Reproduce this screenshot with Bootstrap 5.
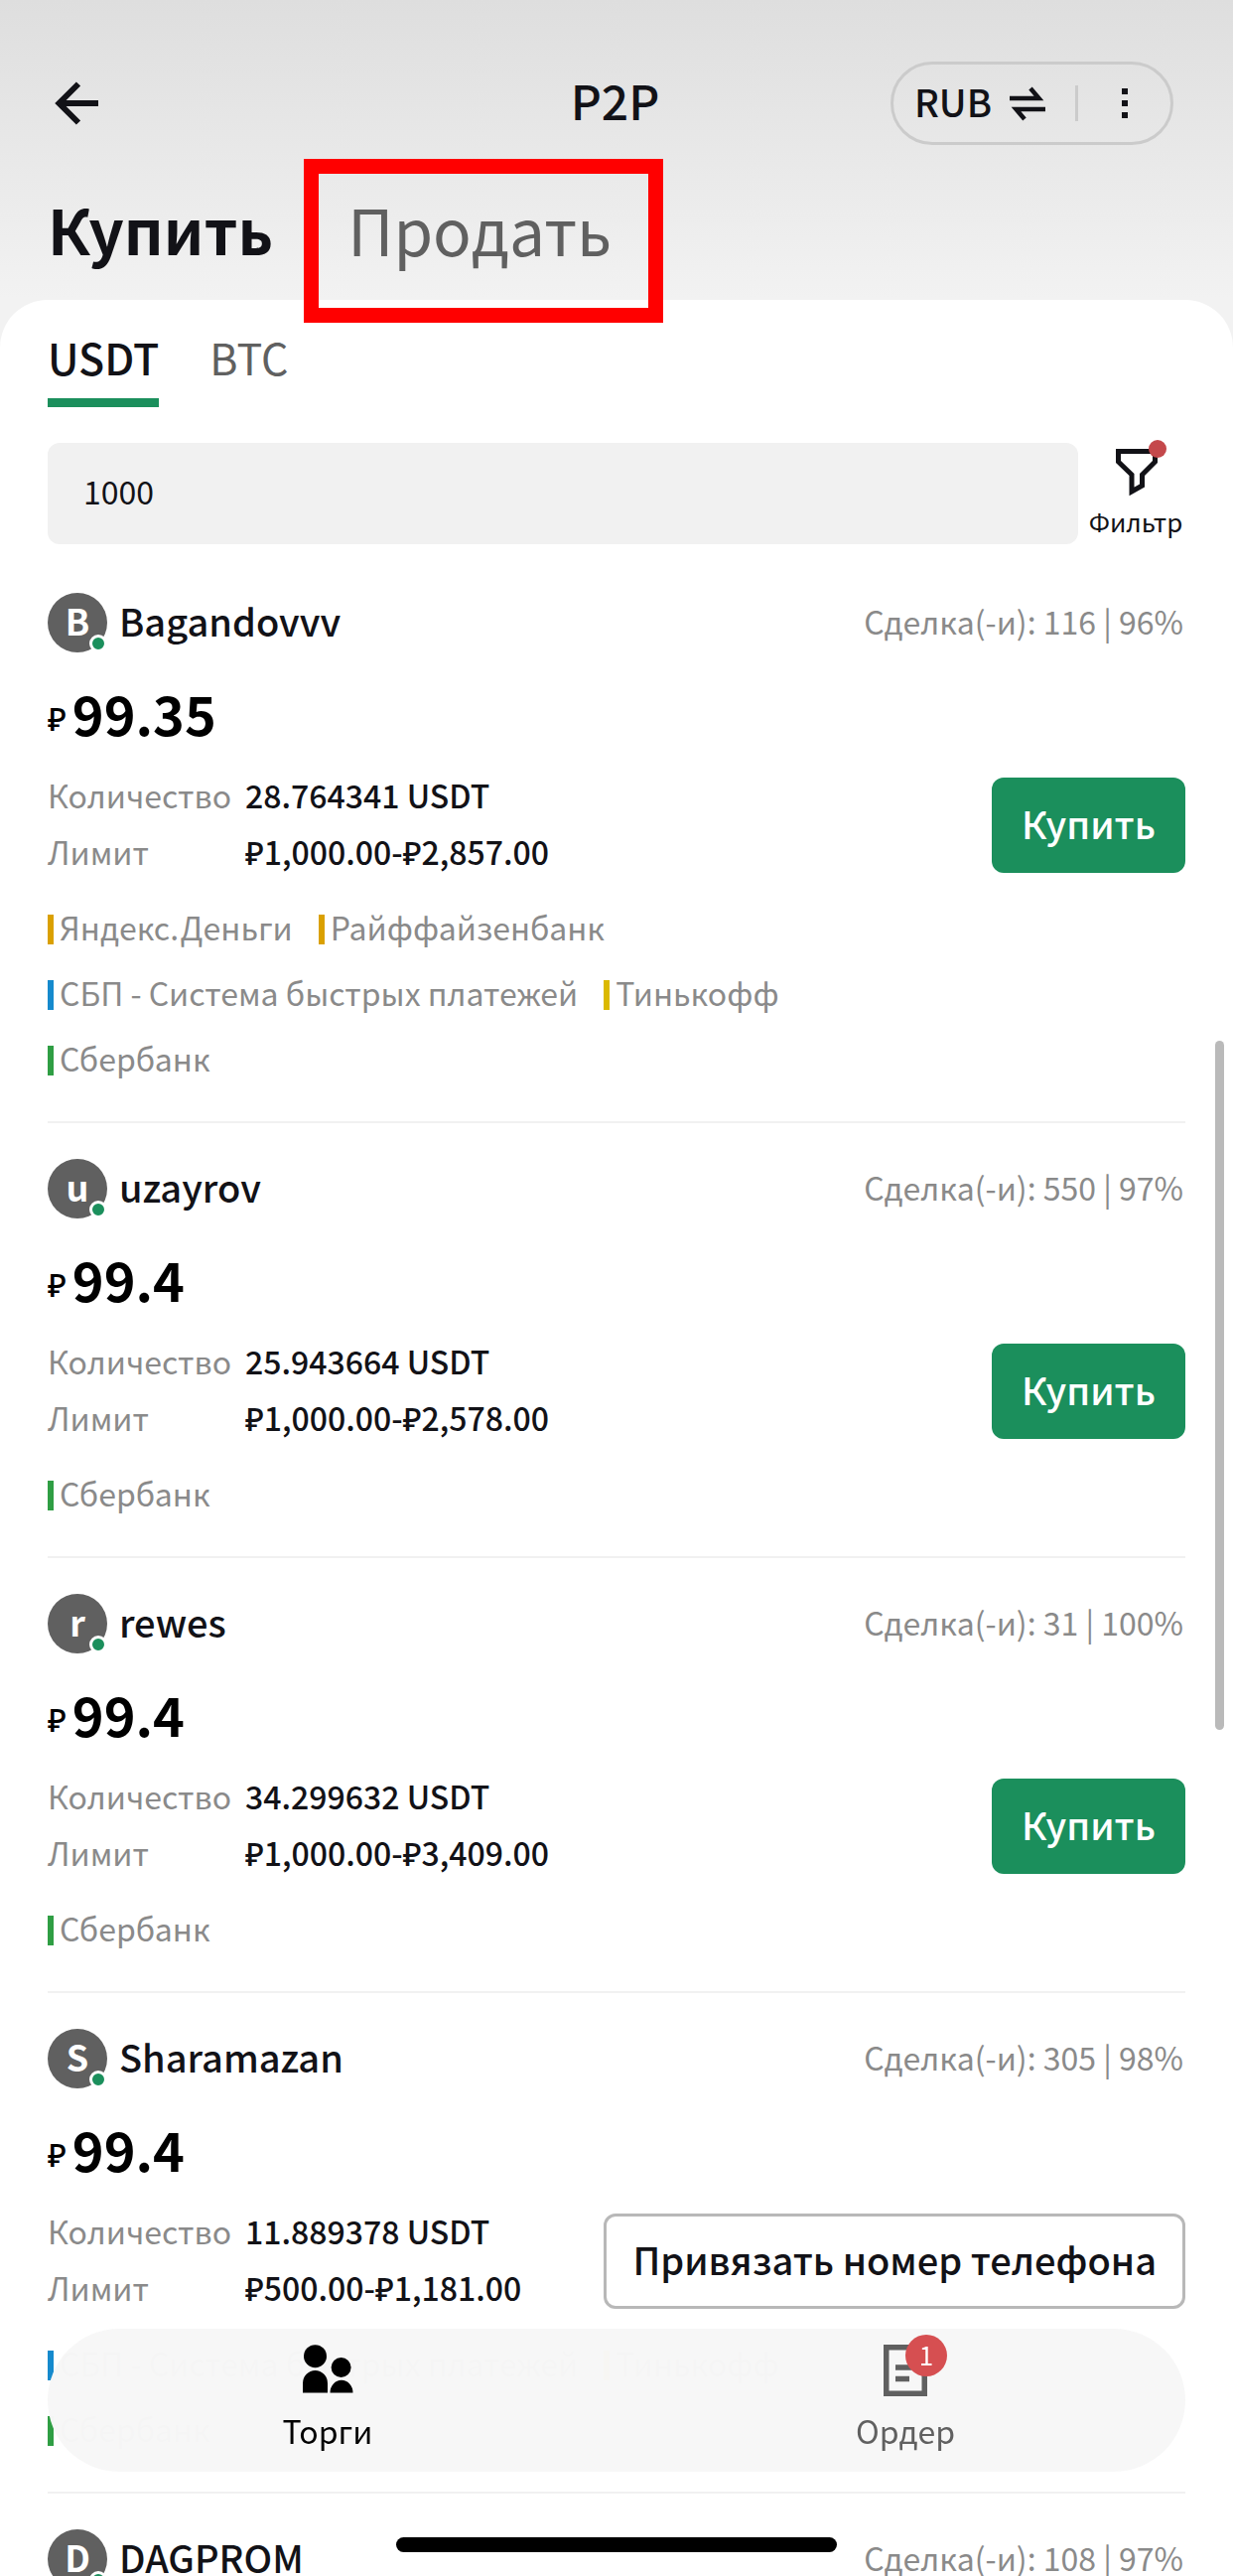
<!DOCTYPE html>
<html lang="ru">
<head>
<meta charset="utf-8">
<meta name="viewport" content="width=device-width, initial-scale=1">
<title>P2P</title>
<link href="https://cdn.jsdelivr.net/npm/bootstrap@5.3.0/dist/css/bootstrap.min.css" rel="stylesheet">
<style>
  :root { --ink: #121217; --muted: #8a8a8a; --slate: #606060; --green: #1b8f5c; }
  body {
    font-family: "Noto Sans CJK SC", "Noto Sans", sans-serif;
    font-size: 32px; line-height: 48px; color: var(--ink);
    height: 100vh; overflow: hidden;
    background: #f1f1f1 linear-gradient(#dedede, #f2f2f2 300px) no-repeat;
  }
  a { color: inherit; text-decoration: none; }
  svg { display: block; }
  .icon-btn { background: none; border: 0; padding: 0; color: inherit; }
  .topbar { padding: 62px 60px 0 54px; }
  .topbar-side { flex: 1 1 0; }
  .page-title { font-size: 48px; line-height: 72px; font-weight: 500; margin: 0; padding: 0 0 8px 3px; }
  .pill { height: 84px; border: 3px solid #cbcbcb; border-radius: 42px; padding: 0 43px 0 21px; }
  .pill-label { font-size: 38px; font-weight: 500; gap: 18px; }
  .pill-label span { padding-bottom: 4px; }
  .pill-rule { width: 3px; height: 36px; background: #cbcbcb; margin: 0 44px 0 30px; }
  .modes { padding: 0 48px; height: 156px; gap: 75px; line-height: 84px; color: var(--slate); font-size: 64px; }
  .modes .active { color: var(--ink); font-weight: 700; font-size: 62px; }
  .modes a { margin-top: 42px; height: 84px; }
  .mode-frame { position: absolute; left: -44px; right: -52px; top: -28px; height: 165px; border: 15px solid #f00; pointer-events: none; z-index: 2; }
  .sheet { background: #fff; border-radius: 48px 48px 0 0; padding: 24px 48px 0; min-height: 100vh; }
  .coins { gap: 51px; font-size: 43px; line-height: 66px; color: var(--slate); }
  .coins a { padding-bottom: 9px; border-bottom: 9px solid transparent; }
  .coins .active { color: var(--ink); font-weight: 500; border-color: var(--green); }
  .search { margin-top: 36px; gap: 10px; padding-right: 2px; }
  .search .form-control { height: 102px; border: 0; border-radius: 12px; background: #f1f1f1; font-size: 32px; padding: 0 36px 6px; color: var(--ink); }
  .filter-btn { font-size: 26px; line-height: 34px; white-space: nowrap; }
  .filter-dot { position: absolute; left: 61px; top: -3px; width: 18px; height: 18px; border-radius: 50%; background: #c4484b; }
  .offers { margin-top: 13px; }
  .offer { padding: 36px 0 28px; border-bottom: 2px solid #f1f1f1; }
  .avatar { width: 60px; height: 60px; border-radius: 50%; background: var(--slate); color: #fff; font-weight: 700; font-size: 36px; line-height: 54px; text-align: center; }
  .online { position: absolute; right: 0; bottom: 0; width: 18px; height: 18px; border: 3px solid #fff; border-radius: 50%; background: var(--green); }
  .nick { font-size: 38px; font-weight: 500; padding-bottom: 5px; }
  .deals { color: var(--muted); padding: 0 2px 5px 0; }
  .price { margin-top: 25px; gap: 6px; height: 72px; line-height: 72px; color: #000; }
  .price b { font-size: 54px; font-weight: 700; }
  .price span { font-weight: 500; padding-top: 8px; }
  .facts { margin-top: 20px; height: 114px; }
  .facts dl { margin: 0; padding-bottom: 4px; display: grid; grid-template-columns: 199px auto; line-height: 57px; }
  .facts dt { font-weight: 400; color: var(--muted); }
  .facts dd { margin: 0; font-weight: 500; }
  .act { height: 96px; border-radius: 12px; padding: 0 30px 6px; font-size: 38px; font-weight: 500; }
  .act-buy, .act-buy:hover { background: var(--green); color: #fff; border: 0; }
  .act-link, .act-link:hover { background: #fff; color: var(--ink); border: 3px solid #b8b8b8; padding: 0 26px 6px; }
  .banks { margin: 15px 0 0; padding: 0; list-style: none; column-gap: 26px; color: var(--muted); }
  .banks li { height: 66px; gap: 6px; padding-bottom: 6px; }
  .banks li::before { content: ""; width: 6px; height: 30px; margin-top: 6px; background: var(--bank); }
  .bank-amber { --bank: #daa000; }
  .bank-blue { --bank: #168acd; }
  .bank-yellow { --bank: #dbb900; }
  .bank-green { --bank: #2f9e44; }
  .dock { position: fixed; left: 48px; right: 48px; bottom: 105px; height: 144px; border-radius: 72px; background: rgba(247, 247, 247, .985); gap: 18px; padding: 15px 0; z-index: 3; color: var(--slate); }
  .dock .active { color: #000; }
  .dock a { gap: 9px; }
  .order-count { position: absolute; left: 22px; top: -9px; width: 42px; height: 42px; border-radius: 50%; background: #d64f51; color: #fff; font-size: 26px; line-height: 40px; text-align: center; }
  .home-bar { position: fixed; left: 50%; bottom: 24px; width: 444px; height: 15px; margin-left: -222px; border-radius: 8px; background: #000; z-index: 4; }
  .scroll-thumb { position: fixed; right: 9px; top: 1048px; width: 9px; height: 694px; border-radius: 5px; background: #bababa; z-index: 4; }
</style>
</head>
<body>
<header>
  <div class="topbar d-flex align-items-center">
    <div class="topbar-side d-flex">
      <button class="icon-btn" type="button" aria-label="Назад">
        <svg width="48" height="48" viewBox="0 0 48 48" fill="none" stroke="currentColor" stroke-width="6"><path d="M45 24H6M25 4.500 5.500 24 25 43.500"/></svg>
      </button>
    </div>
    <h1 class="page-title">P2P</h1>
    <div class="topbar-side d-flex justify-content-end">
      <div class="pill d-flex align-items-center">
        <button class="icon-btn pill-label d-flex align-items-center" type="button"><span>RUB</span>
          <svg width="36" height="36" viewBox="0 0 36 36" fill="none" stroke="currentColor" stroke-width="4.500"><path d="M0 13H29.500L21 3M36 24H6.500L15 34"/></svg>
        </button>
        <span class="pill-rule"></span>
        <button class="icon-btn d-flex" type="button" aria-label="Меню">
          <svg width="6" height="30" viewBox="0 0 6 30" fill="currentColor"><path d="M0 0h6v6H0zM0 12h6v6H0zM0 24h6v6H0z"/></svg>
        </button>
      </div>
    </div>
  </div>
  <nav class="modes d-flex">
    <a class="active" href="#">Купить</a>
    <a class="position-relative" href="#">Продать<span class="mode-frame"></span></a>
  </nav>
</header>
<main class="sheet">
  <nav class="coins d-flex">
    <a class="active" href="#">USDT</a>
    <a href="#">BTC</a>
  </nav>
  <form class="search d-flex">
    <input class="form-control" type="text" value="1000" aria-label="Сумма">
    <button class="icon-btn filter-btn position-relative d-flex flex-column align-items-center" type="button">
      <svg width="96" height="62" viewBox="0 0 96 62" fill="none" stroke="#121217" stroke-width="5"><path d="M30.500 8.500H67.500V19L54.500 32V43L44 49V32L30.500 19Z"/></svg>
      Фильтр<span class="filter-dot"></span>
    </button>
  </form>
  <section class="offers">
    <article class="offer">
      <div class="d-flex align-items-center">
        <div class="avatar position-relative">B<span class="online"></span></div>
        <div class="nick ms-2 ps-1 flex-grow-1">Bagandovvv</div>
        <div class="deals">Сделка(-и): 116 | 96%</div>
      </div>
      <div class="price d-flex align-items-center"><span>₽</span><b>99.35</b></div>
      <div class="facts d-flex justify-content-between align-items-center">
        <dl><dt>Количество</dt><dd>28.764341 USDT</dd><dt>Лимит</dt><dd>₽1,000.00-₽2,857.00</dd></dl>
        <button class="btn act act-buy" type="button">Купить</button>
      </div>
      <ul class="banks w-75 d-flex flex-wrap">
        <li class="bank-amber d-flex align-items-center">Яндекс.Деньги</li>
        <li class="bank-amber d-flex align-items-center">Райффайзенбанк</li>
        <li class="bank-blue d-flex align-items-center">СБП - Система быстрых платежей</li>
        <li class="bank-yellow d-flex align-items-center">Тинькофф</li>
        <li class="bank-green d-flex align-items-center">Сбербанк</li>
      </ul>
    </article>
    <article class="offer">
      <div class="d-flex align-items-center">
        <div class="avatar position-relative">u<span class="online"></span></div>
        <div class="nick ms-2 ps-1 flex-grow-1">uzayrov</div>
        <div class="deals">Сделка(-и): 550 | 97%</div>
      </div>
      <div class="price d-flex align-items-center"><span>₽</span><b>99.4</b></div>
      <div class="facts d-flex justify-content-between align-items-center">
        <dl><dt>Количество</dt><dd>25.943664 USDT</dd><dt>Лимит</dt><dd>₽1,000.00-₽2,578.00</dd></dl>
        <button class="btn act act-buy" type="button">Купить</button>
      </div>
      <ul class="banks w-75 d-flex flex-wrap">
        <li class="bank-green d-flex align-items-center">Сбербанк</li>
      </ul>
    </article>
    <article class="offer">
      <div class="d-flex align-items-center">
        <div class="avatar position-relative">r<span class="online"></span></div>
        <div class="nick ms-2 ps-1 flex-grow-1">rewes</div>
        <div class="deals">Сделка(-и): 31 | 100%</div>
      </div>
      <div class="price d-flex align-items-center"><span>₽</span><b>99.4</b></div>
      <div class="facts d-flex justify-content-between align-items-center">
        <dl><dt>Количество</dt><dd>34.299632 USDT</dd><dt>Лимит</dt><dd>₽1,000.00-₽3,409.00</dd></dl>
        <button class="btn act act-buy" type="button">Купить</button>
      </div>
      <ul class="banks w-75 d-flex flex-wrap">
        <li class="bank-green d-flex align-items-center">Сбербанк</li>
      </ul>
    </article>
    <article class="offer">
      <div class="d-flex align-items-center">
        <div class="avatar position-relative">S<span class="online"></span></div>
        <div class="nick ms-2 ps-1 flex-grow-1">Sharamazan</div>
        <div class="deals">Сделка(-и): 305 | 98%</div>
      </div>
      <div class="price d-flex align-items-center"><span>₽</span><b>99.4</b></div>
      <div class="facts d-flex justify-content-between align-items-center">
        <dl><dt>Количество</dt><dd>11.889378 USDT</dd><dt>Лимит</dt><dd>₽500.00-₽1,181.00</dd></dl>
        <button class="btn act act-link" type="button">Привязать номер телефона</button>
      </div>
      <ul class="banks w-75 d-flex flex-wrap">
        <li class="bank-blue d-flex align-items-center">СБП - Система быстрых платежей</li>
        <li class="bank-yellow d-flex align-items-center">Тинькофф</li>
        <li class="bank-green d-flex align-items-center">Сбербанк</li>
      </ul>
    </article>
    <article class="offer">
      <div class="d-flex align-items-center">
        <div class="avatar position-relative">D<span class="online"></span></div>
        <div class="nick ms-2 ps-1 flex-grow-1">DAGPROM</div>
        <div class="deals">Сделка(-и): 108 | 97%</div>
      </div>
    </article>
  </section>
</main>
<nav class="dock d-flex">
  <a class="active flex-fill w-50 d-flex flex-column align-items-center" href="#">
    <svg width="54" height="54" viewBox="0 0 54 54" fill="currentColor"><circle cx="14.500" cy="12.700" r="11.500"/><circle cx="40.600" cy="24" r="10"/><path d="M2 49.500V40a12.500 13 0 0 1 25 0V49.500ZM29.500 49.500a11.300 12.500 0 0 1 23 0Z"/></svg>
    <span>Торги</span>
  </a>
  <a class="flex-fill w-50 d-flex flex-column align-items-center" href="#">
    <span class="position-relative">
      <svg width="44" height="54" viewBox="0 0 44 54" fill="none" stroke="currentColor" stroke-width="5.500"><path d="M2.750 3.750H41.250V50.250H2.750ZM12 24h16M12 35.500h14"/></svg>
      <span class="order-count">1</span>
    </span>
    <span>Ордер</span>
  </a>
</nav>
<div class="home-bar"></div>
<div class="scroll-thumb"></div>
<script src="https://cdn.jsdelivr.net/npm/bootstrap@5.3.0/dist/js/bootstrap.bundle.min.js"></script>
</body>
</html>
